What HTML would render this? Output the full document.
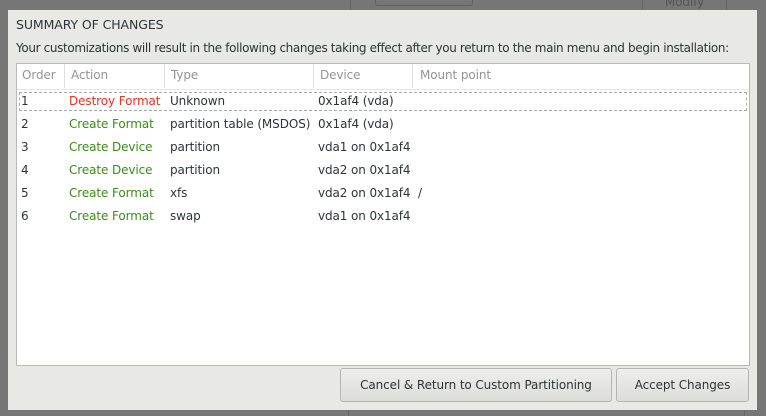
<!DOCTYPE html>
<html><head><style>
body{margin:0;width:766px;height:416px;background:#767676;position:relative;overflow:hidden;font-family:"DejaVu Sans","Liberation Sans",sans-serif;font-size:12px;color:#2e3436;letter-spacing:-0.1px}
.a{position:absolute}
.dlg{left:8px;top:10px;width:749px;height:400px;background:#e8e8e7}
.tbl{left:16px;top:63px;width:732px;height:301px;background:#fff;border:1px solid #b9b9b7}
.h{color:#949494;top:68px}
.sep{top:64px;width:1px;height:24px;background:#e0e0e0}
.r{white-space:nowrap}
.red{color:#e8311f}.grn{color:#3b8b1c}
.btn{background:linear-gradient(#eeeeec,#dcdcda);border:1px solid #b5b5b3;border-radius:3px;text-align:center;line-height:32px;box-sizing:border-box}
</style></head><body>
<div class="a" style="left:350px;top:0;width:1px;height:10px;background:#666"></div>
<div class="a" style="left:375px;top:-5px;width:96px;height:9px;border:1px solid #5f5f5f;border-radius:3px"></div>
<div class="a" style="left:642px;top:0;width:83px;height:10px;border-left:1px solid #666;border-right:1px solid #666;color:#555;font-size:12px;text-align:center;line-height:4px;overflow:hidden">Modify</div>
<div class="a" style="left:348px;top:410px;width:1px;height:6px;background:#666"></div>
<div class="a" style="left:744px;top:410px;width:1px;height:6px;background:#666"></div>
<div class="a dlg"></div>
<div class="a" style="left:16px;top:17px;font-size:12.5px">SUMMARY OF CHANGES</div>
<div class="a r" style="left:16px;top:41px;font-size:12px;letter-spacing:-0.36px">Your customizations will result in the following changes taking effect after you return to the main menu and begin installation:</div>
<div class="a tbl"></div>
<div class="a" style="left:17px;top:89px;width:732px;height:1px;background:#e6e6e6"></div>
<div class="a sep" style="left:64px"></div><div class="a sep" style="left:164px"></div><div class="a sep" style="left:313px"></div><div class="a sep" style="left:412px"></div>
<div class="a h" style="left:22px">Order</div><div class="a h" style="left:71px">Action</div><div class="a h" style="left:171px">Type</div><div class="a h" style="left:320px">Device</div><div class="a h" style="left:420px">Mount point</div>
<div class="a" style="left:19px;top:92px;width:726px;height:17px;border:1px dashed #aaa"></div>
<div class="a r" style="left:21px;top:94px">1</div><div class="a r red" style="left:69px;top:94px">Destroy Format</div><div class="a r" style="left:170px;top:94px">Unknown</div><div class="a r" style="left:318px;top:94px">0x1af4 (vda)</div>
<div class="a r" style="left:21px;top:117px">2</div><div class="a r grn" style="left:69px;top:117px">Create Format</div><div class="a r" style="left:170px;top:117px">partition table (MSDOS)</div><div class="a r" style="left:318px;top:117px">0x1af4 (vda)</div>
<div class="a r" style="left:21px;top:140px">3</div><div class="a r grn" style="left:69px;top:140px">Create Device</div><div class="a r" style="left:170px;top:140px">partition</div><div class="a r" style="left:318px;top:140px">vda1 on 0x1af4</div>
<div class="a r" style="left:21px;top:163px">4</div><div class="a r grn" style="left:69px;top:163px">Create Device</div><div class="a r" style="left:170px;top:163px">partition</div><div class="a r" style="left:318px;top:163px">vda2 on 0x1af4</div>
<div class="a r" style="left:21px;top:186px">5</div><div class="a r grn" style="left:69px;top:186px">Create Format</div><div class="a r" style="left:170px;top:186px">xfs</div><div class="a r" style="left:318px;top:186px">vda2 on 0x1af4</div><div class="a r" style="left:418px;top:186px">/</div>
<div class="a r" style="left:21px;top:209px">6</div><div class="a r grn" style="left:69px;top:209px">Create Format</div><div class="a r" style="left:170px;top:209px">swap</div><div class="a r" style="left:318px;top:209px">vda1 on 0x1af4</div>
<div class="a btn" style="left:340px;top:368px;width:272px;height:34px">Cancel &amp; Return to Custom Partitioning</div>
<div class="a btn" style="left:616px;top:368px;width:133px;height:34px">Accept Changes</div>
</body></html>
